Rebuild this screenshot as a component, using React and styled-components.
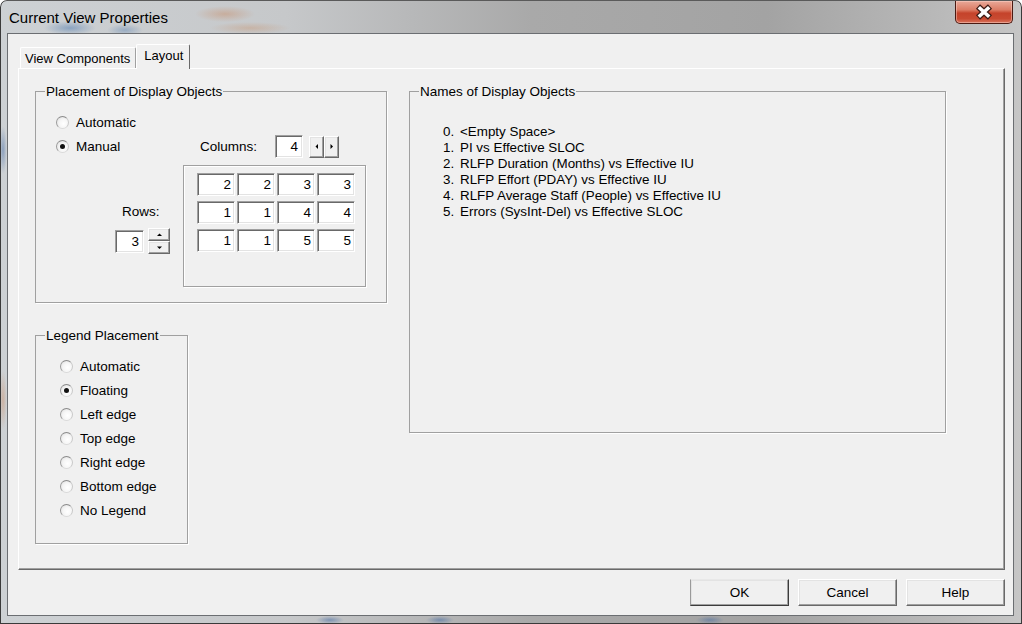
import { Fragment } from 'react'
import styled, { createGlobalStyle, css } from 'styled-components'

const GlobalStyle = createGlobalStyle`
  html, body { margin: 0; padding: 0; background: #fff; }
  body { font-family: "Liberation Sans", Arial, sans-serif; color: #000; }
  * { box-sizing: border-box; }
`

const raised = css`
  background: #f0f0f0;
  border: 1px solid;
  border-color: #fff #696969 #696969 #fff;
  box-shadow: inset -1px -1px 0 #a0a0a0, inset 1px 1px 0 #e3e3e3;
`

const sunken = css`
  background: #fff;
  border: 1px solid;
  border-color: #a0a0a0 #fff #fff #a0a0a0;
  box-shadow: inset 1px 1px 0 #696969, inset -1px -1px 0 #e3e3e3;
`

const Window = styled.div`
  width: 1022px;
  height: 624px;
  display: flex;
  flex-direction: column;
  padding: 0 8px 8px 7px;
  border-radius: 7px 7px 0 0;
  background:
    radial-gradient(ellipse 26px 7px at 70px 28px, rgba(60, 110, 170, 0.45), transparent),
    radial-gradient(ellipse 18px 6px at 125px 30px, rgba(60, 110, 170, 0.35), transparent),
    radial-gradient(ellipse 30px 8px at 225px 14px, rgba(200, 120, 70, 0.35), transparent),
    radial-gradient(ellipse 40px 6px at 250px 28px, rgba(200, 130, 80, 0.3), transparent),
    radial-gradient(ellipse 4px 24px at 3px 150px, rgba(60, 100, 160, 0.45), transparent),
    radial-gradient(ellipse 4px 30px at 3px 400px, rgba(200, 120, 70, 0.35), transparent),
    radial-gradient(ellipse 14px 4px at 330px 620px, rgba(60, 100, 160, 0.5), transparent),
    radial-gradient(ellipse 14px 4px at 440px 620px, rgba(60, 100, 160, 0.5), transparent),
    radial-gradient(ellipse 14px 4px at 710px 620px, rgba(60, 100, 160, 0.45), transparent),
    linear-gradient(90deg, #cdd1d4 0%, #c6c8ca 28%, #a9a9a9 52%, #a3a3a3 75%, #b9b9b9 92%, #c6c6c6 100%);
  box-shadow: inset 1px 0 0 #3a3a3a, inset -1px 0 0 #3a3a3a, inset 0 -1px 0 #3a3a3a, inset 0 1px 0 #5a5a5a;
`

const TitleBar = styled.div`
  height: 33px;
  display: flex;
  justify-content: space-between;
  align-items: flex-start;
`

const Title = styled.div`
  padding: 10px 0 0 2px;
  font-size: 15px;
  line-height: 16px;
  color: #000;
`

const CloseButton = styled.div`
  width: 58px;
  height: 23px;
  margin: 1px 1px 0 0;
  border: 1px solid #4a1a12;
  border-top: none;
  border-radius: 0 0 5px 5px;
  background: linear-gradient(180deg, #e9a999 0%, #dc7c65 40%, #c5432b 55%, #c84a31 80%, #d9735c 100%);
  box-shadow: inset 0 0 0 1px rgba(255, 220, 210, 0.45);
  display: flex;
  align-items: center;
  justify-content: center;
`

const Client = styled.div`
  flex: 1;
  display: flex;
  flex-direction: column;
  padding: 10px 8px 9px 10px;
  background: #f0f0f0;
  border: 1px solid #6b6e72;
`

const TabStrip = styled.div`
  height: 24px;
  display: flex;
  align-items: flex-end;
  padding-left: 2px;
`

const Tab = styled.div`
  position: relative;
  display: flex;
  align-items: center;
  font-size: 13px;
  background: #f0f0f0;
  border: 1px solid;
  border-bottom: none;
  border-color: #fff #a0a0a0 #fff #fff;
  border-radius: 2px 2px 0 0;
  ${(p) =>
    p.$active
      ? css`
          height: 25px;
          margin-bottom: -1px;
          padding: 0 6px 3px 7px;
          z-index: 1;
          border-right-color: #696969;
        `
      : css`
          height: 21px;
          padding: 0 5px 0 4px;
        `}
`

const Panel = styled.div`
  flex: 1;
  display: flex;
  align-items: flex-start;
  gap: 22px;
  padding: 15px 0 0 16px;
  border: 1px solid;
  border-color: #fff #696969 #696969 #fff;
  box-shadow: inset -1px -1px 0 #a0a0a0;
`

const Column = styled.div`
  display: flex;
  flex-direction: column;
  gap: 25px;
`

const Group = styled.fieldset`
  margin: 0;
  padding: 0;
  width: ${(p) => p.$w}px;
  height: ${(p) => p.$h}px;
  border: 1px solid #a0a0a0;
  box-shadow: 1px 1px 0 #fff;
  font-size: 13.5px;
`

const Caption = styled.legend`
  margin-left: 9px;
  padding: 0 1px;
  line-height: 15px;
  font-size: 13.5px;
`

const PlacementBody = styled.div`
  display: grid;
  grid-template-columns: 127px auto;
  padding: 11px 0 0 20px;
`

const RadioList = styled.div`
  display: flex;
  flex-direction: column;
  padding: ${(p) => p.$pad || '0'};
`

const RadioRow = styled.label`
  height: 24px;
  display: flex;
  align-items: center;
  gap: 7px;
  font-size: 13.5px;
`

const RadioCircle = styled.span`
  width: 13px;
  height: 13px;
  border-radius: 50%;
  border: 1px solid;
  border-color: #8a8a8a #c8c8c8 #dadada #9a9a9a;
  background: radial-gradient(circle at 60% 60%, #ffffff 0%, #f6f6f6 45%, #dcdcdc 100%);
  display: flex;
  align-items: center;
  justify-content: center;
  flex-shrink: 0;
  &::after {
    content: '';
    width: 5px;
    height: 5px;
    border-radius: 50%;
    background: ${(p) => (p.$checked ? '#111' : 'transparent')};
  }
`

const RowsBlock = styled.div`
  margin: 46px 0 0 59px;
  display: flex;
  flex-direction: column;
`

const FieldLabel = styled.span`
  font-size: 13.5px;
  line-height: 16px;
  padding-left: ${(p) => p.$pl || 0}px;
  width: ${(p) => (p.$w ? `${p.$w}px` : 'auto')};
`

const SpinRow = styled.div`
  display: flex;
  align-items: center;
  gap: ${(p) => p.$gap}px;
  margin-top: ${(p) => p.$mt || 0}px;
`

const NumberBox = styled.div`
  ${sunken};
  width: ${(p) => p.$w}px;
  height: 23px;
  display: flex;
  align-items: center;
  justify-content: flex-end;
  padding-right: 4px;
  font-size: 13.5px;
`

const UpDown = styled.div`
  display: flex;
  flex-direction: column;
  width: 22px;
`

const LeftRight = styled.div`
  display: flex;
  height: 22px;
`

const SpinButton = styled.div`
  ${raised};
  width: ${(p) => p.$w}px;
  height: ${(p) => p.$h}px;
  display: flex;
  align-items: center;
  justify-content: center;
`

const ColumnsArea = styled.div`
  margin-top: 25px;
  display: flex;
  flex-direction: column;
`

const GridBox = styled.div`
  margin-top: 7px;
  width: 183px;
  height: 122px;
  border: 1px solid #a0a0a0;
  box-shadow: 1px 1px 0 #fff, inset 1px 1px 0 #fff;
  padding: 7px 0 0 13px;
  display: grid;
  grid-template-columns: repeat(4, 38px);
  grid-auto-rows: 23px;
  column-gap: 2px;
  row-gap: 5px;
  align-content: start;
`

const Cell = styled.div`
  ${sunken};
  display: flex;
  align-items: center;
  justify-content: flex-end;
  padding-right: 3px;
  font-size: 13.5px;
`

const NameList = styled.div`
  display: grid;
  grid-template-columns: 17px auto;
  grid-auto-rows: 16px;
  align-items: center;
  padding: 24px 0 0 33px;
  font-size: 13.4px;
`

const ButtonRow = styled.div`
  display: flex;
  justify-content: flex-end;
  gap: 9px;
  margin-top: 9px;
`

const DialogButton = styled.div`
  ${raised};
  width: 99px;
  height: 27px;
  display: flex;
  align-items: center;
  justify-content: center;
  font-size: 13.5px;
  ${(p) => p.$default && css`border-color: #e8e8e8 #3c3c3c #3c3c3c #9a9a9a;`}
`

const Arrow = ({ dir }) => {
  const pts = {
    up: '0,3 5,3 2.5,0.5',
    down: '0,0.5 5,0.5 2.5,3',
    left: '3,0 3,5 0.5,2.5',
    right: '0.5,0 0.5,5 3,2.5',
  }[dir]
  const vertical = dir === 'up' || dir === 'down'
  return (
    <svg width={vertical ? 5 : 4} height={vertical ? 4 : 5} viewBox={vertical ? '0 0 5 4' : '0 0 4 5'}>
      <polygon points={pts} fill="#000" />
    </svg>
  )
}

const CloseIcon = () => (
  <svg width="20" height="16" viewBox="0 0 20 16">
    <path d="M4 2.5 L16 13.5 M16 2.5 L4 13.5" stroke="#3b1a14" strokeWidth="6" />
    <path d="M4.8 3.2 L15.2 12.8 M15.2 3.2 L4.8 12.8" stroke="#fff" strokeWidth="3.6" />
  </svg>
)

const grid = [
  [2, 2, 3, 3],
  [1, 1, 4, 4],
  [1, 1, 5, 5],
]

const names = [
  '<Empty Space>',
  'PI vs Effective SLOC',
  'RLFP Duration (Months) vs Effective IU',
  'RLFP Effort (PDAY) vs Effective IU',
  'RLFP Average Staff (People) vs Effective IU',
  'Errors (SysInt-Del) vs Effective SLOC',
]

const legendOptions = ['Automatic', 'Floating', 'Left edge', 'Top edge', 'Right edge', 'Bottom edge', 'No Legend']

function Radio({ label, checked }) {
  return (
    <RadioRow>
      <RadioCircle $checked={checked} />
      {label}
    </RadioRow>
  )
}

export default function App() {
  return (
    <>
      <GlobalStyle />
      <Window>
        <TitleBar>
          <Title>Current View Properties</Title>
          <CloseButton>
            <CloseIcon />
          </CloseButton>
        </TitleBar>
        <Client>
          <TabStrip>
            <Tab>View Components</Tab>
            <Tab $active>Layout</Tab>
          </TabStrip>
          <Panel>
            <Column>
              <Group $w={352} $h={219}>
                <Caption>Placement of Display Objects</Caption>
                <PlacementBody>
                  <div>
                    <RadioList>
                      <Radio label="Automatic" />
                      <Radio label="Manual" checked />
                    </RadioList>
                    <RowsBlock>
                      <FieldLabel $pl={7}>Rows:</FieldLabel>
                      <SpinRow $gap={4} $mt={8}>
                        <NumberBox $w={29}>3</NumberBox>
                        <UpDown>
                          <SpinButton $w={22} $h={13}>
                            <Arrow dir="up" />
                          </SpinButton>
                          <SpinButton $w={22} $h={13}>
                            <Arrow dir="down" />
                          </SpinButton>
                        </UpDown>
                      </SpinRow>
                    </RowsBlock>
                  </div>
                  <ColumnsArea>
                    <SpinRow $gap={6}>
                      <FieldLabel $pl={17} $w={86}>Columns:</FieldLabel>
                      <NumberBox $w={28}>4</NumberBox>
                      <LeftRight>
                        <SpinButton $w={15} $h={22}>
                          <Arrow dir="left" />
                        </SpinButton>
                        <SpinButton $w={15} $h={22}>
                          <Arrow dir="right" />
                        </SpinButton>
                      </LeftRight>
                    </SpinRow>
                    <GridBox>
                      {grid.flat().map((v, i) => (
                        <Cell key={i}>{v}</Cell>
                      ))}
                    </GridBox>
                  </ColumnsArea>
                </PlacementBody>
              </Group>
              <Group $w={153} $h={216}>
                <Caption>Legend Placement</Caption>
                <RadioList $pad="11px 0 0 24px">
                  {legendOptions.map((o) => (
                    <Radio key={o} label={o} checked={o === 'Floating'} />
                  ))}
                </RadioList>
              </Group>
            </Column>
            <Group $w={537} $h={349}>
              <Caption>Names of Display Objects</Caption>
              <NameList>
                {names.map((n, i) => (
                  <Fragment key={i}>
                    <span>{i}.</span>
                    <span>{n}</span>
                  </Fragment>
                ))}
              </NameList>
            </Group>
          </Panel>
          <ButtonRow>
            <DialogButton $default>OK</DialogButton>
            <DialogButton>Cancel</DialogButton>
            <DialogButton>Help</DialogButton>
          </ButtonRow>
        </Client>
      </Window>
    </>
  )
}
